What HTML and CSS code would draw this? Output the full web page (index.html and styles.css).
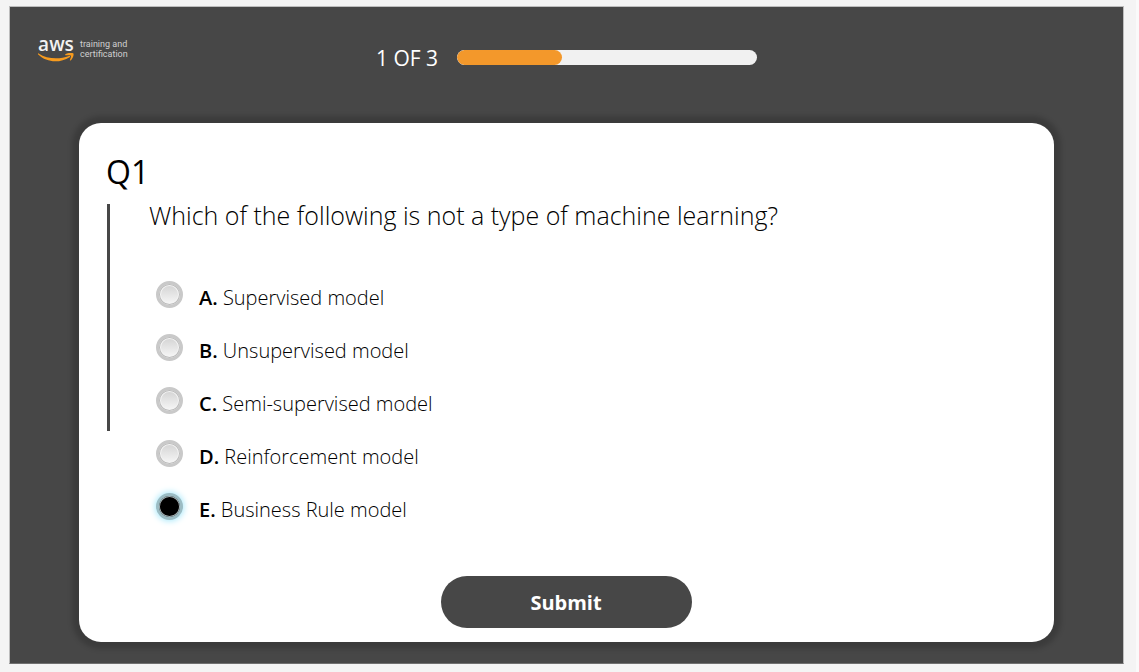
FILE: index.html
```html
<!DOCTYPE html>
<html lang="en">
<head>
<meta charset="utf-8">
<meta name="viewport" content="width=device-width, initial-scale=1">
<title>Knowledge check</title>
<link rel="stylesheet" href="styles.css">
</head>
<body>
<main class="stage">
  <header class="topbar">
    <div class="logo">
      <div class="logo-mark">
        <span class="logo-name">aws</span>
        <svg class="logo-smile" viewBox="0 0 36 9" aria-hidden="true">
          <path d="M0.600 0.400C9 6 21 6.800 31 2.900C32 2.600 32.500 3.600 31.600 4.200C22 10.400 8.500 9.800 0.200 1.600C-0.300 0.900 0 0.200 0.600 0.400Z"/>
          <path d="M27.300 1.300C30 -0.500 34.700 -0.500 35.400 0.500C36.100 1.800 34.900 5.700 32.600 7.500C32.100 7.800 31.700 7.500 31.900 7C32.600 5.200 33.300 3.200 32.800 2.600C32.300 2 29.800 2.100 27.800 2.300C27.100 2.300 26.900 1.700 27.300 1.300Z"/>
        </svg>
      </div>
      <div class="logo-text">training and<br>certification</div>
    </div>
    <div class="progress">
      <span class="progress-label">1 OF 3</span>
      <div class="progress-track" role="progressbar" aria-label="Quiz progress" aria-valuemin="0" aria-valuemax="3" aria-valuenow="1">
        <div class="progress-fill" style="width: 35%"></div>
      </div>
    </div>
  </header>

  <form class="card">
    <h1 class="number">Q1</h1>
    <div class="body">
      <div class="rule"></div>
      <fieldset class="question">
        <legend class="prompt">Which of the following is not a type of machine learning?</legend>
        <label class="option"><input class="radio" type="radio" name="answer" value="a"><span class="answer"><b class="letter">A.</b> Supervised model</span></label>
        <label class="option"><input class="radio" type="radio" name="answer" value="b"><span class="answer"><b class="letter">B.</b> Unsupervised model</span></label>
        <label class="option"><input class="radio" type="radio" name="answer" value="c"><span class="answer"><b class="letter">C.</b> Semi-supervised model</span></label>
        <label class="option"><input class="radio" type="radio" name="answer" value="d"><span class="answer"><b class="letter">D.</b> Reinforcement model</span></label>
        <label class="option"><input class="radio" type="radio" name="answer" value="e" checked><span class="answer"><b class="letter">E.</b> Business Rule model</span></label>
      </fieldset>
    </div>
    <button class="submit" type="submit">Submit</button>
  </form>
</main>
</body>
</html>
```
FILE: styles.css
```css
* {
  box-sizing: border-box;
}

body {
  margin: 0;
  min-height: 100vh;
  padding: 6px 12px 8px 9px;
  border-right: 3px solid #fafafa;
  background: #f4f4f4;
  color: #000;
  font-family: "Open Sans", "Noto Sans", sans-serif;
}

.stage {
  display: flex;
  flex-direction: column;
  padding-bottom: 21px;
  border: 1px solid #bdbdbd;
  border-bottom-color: #707070;
  background: #474747;
}

.topbar {
  display: grid;
  grid-template-columns: 1fr auto 1fr;
  padding: 29px 28px 0;
  height: 116px;
}

.logo {
  display: flex;
  gap: 6px;
  align-items: flex-start;
  color: #f2f2f2;
}

.logo-mark {
  width: 36px;
}

.logo-name {
  display: block;
  font-size: 19px;
  line-height: 17px;
  font-weight: 600;
  text-align: center;
}

.logo-smile {
  display: block;
  width: 36px;
  height: 9px;
  fill: #f79b1e;
}

.logo-text {
  padding-top: 3px;
  color: #d0d0d0;
  font-family: Roboto, "Liberation Sans", sans-serif;
  font-size: 9px;
  line-height: 10px;
  white-space: nowrap;
}

.progress {
  display: flex;
  align-items: center;
  gap: 19px;
  height: 43px;
}

.progress-label {
  color: #fff;
  font-size: 21px;
  line-height: 28px;
}

.progress-track {
  width: 300px;
  height: 15px;
  border-radius: 8px;
  background: #f1f1f1;
  overflow: hidden;
}

.progress-fill {
  height: 100%;
  border-radius: 8px;
  background: #f3982b;
}

.card {
  display: flex;
  flex-direction: column;
  margin: 0 69px;
  padding: 27px 28px 14px 27px;
  border-radius: 22px;
  background: #fff;
  box-shadow: 0 0 5px 7px rgba(0, 0, 0, 0.17);
}

.number {
  margin: 0;
  font-size: 32px;
  line-height: 44px;
  font-weight: 400;
}

.body {
  display: flex;
  gap: 39px;
  padding: 10px 0 0 1px;
}

.rule {
  flex: none;
  width: 3px;
  height: 227px;
  background: #474747;
}

.question {
  flex: 1;
  min-width: 0;
  margin: 0;
  padding: 0;
  border: 0;
}

.prompt {
  margin-bottom: 42px;
  padding: 0;
  font-size: 25px;
  line-height: 22px;
  font-weight: 300;
}

.option {
  display: flex;
  align-items: center;
  gap: 16px;
  height: 53px;
  padding-left: 7px;
}

.radio {
  appearance: none;
  flex: none;
  width: 27px;
  height: 27px;
  margin: 0;
  border: 3px solid #c9c9c9;
  border-radius: 50%;
  background: linear-gradient(#d2d2d2, #f8f8f8);
  box-shadow: inset 0 0 0 1px #bababa, inset 0 0 0 2px #f4f4f4;
}

.radio:checked {
  border-color: #9bbcc4;
  background: #000;
  box-shadow: inset 0 0 0 1px #a9b4b7, 0 0 6px 1px #a8e8fa;
}

.answer {
  padding-top: 6px;
  font-size: 20px;
  line-height: 28px;
  font-weight: 300;
}

.letter {
  font-weight: 600;
}

.submit {
  align-self: center;
  width: 251px;
  height: 52px;
  margin-top: 43px;
  padding: 2px 0 0;
  border: 0;
  border-radius: 26px;
  background: #474747;
  color: #fff;
  font: 700 20px/28px "Open Sans", "Noto Sans", sans-serif;
}
```
